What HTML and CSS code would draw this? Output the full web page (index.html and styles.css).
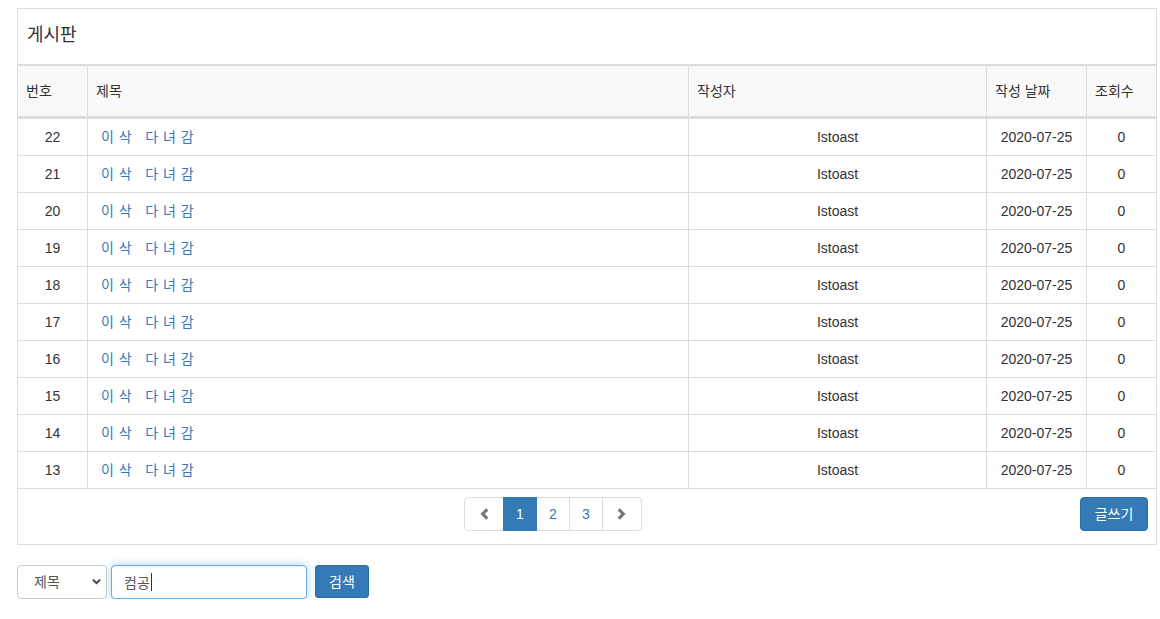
FILE: index.html
```html
<!DOCTYPE html>
<html lang="ko">
<head>
<meta charset="utf-8">
<title>게시판</title>
<link rel="stylesheet" href="styles.css">
</head>
<body>
<div class="page">
  <div class="panel">
    <div class="panel-heading">게시판</div>
    <table class="board">
      <colgroup>
        <col class="col-no"><col class="col-title"><col class="col-author"><col class="col-date"><col class="col-views">
      </colgroup>
      <thead>
        <tr><th>번호</th><th>제목</th><th>작성자</th><th>작성 날짜</th><th>조회수</th></tr>
      </thead>
      <tbody>
        <tr><td class="center">22</td><td><a href="#">이 삭&nbsp;&nbsp; 다 녀 감</a></td><td class="center">Istoast</td><td class="center">2020-07-25</td><td class="center">0</td></tr>
        <tr><td class="center">21</td><td><a href="#">이 삭&nbsp;&nbsp; 다 녀 감</a></td><td class="center">Istoast</td><td class="center">2020-07-25</td><td class="center">0</td></tr>
        <tr><td class="center">20</td><td><a href="#">이 삭&nbsp;&nbsp; 다 녀 감</a></td><td class="center">Istoast</td><td class="center">2020-07-25</td><td class="center">0</td></tr>
        <tr><td class="center">19</td><td><a href="#">이 삭&nbsp;&nbsp; 다 녀 감</a></td><td class="center">Istoast</td><td class="center">2020-07-25</td><td class="center">0</td></tr>
        <tr><td class="center">18</td><td><a href="#">이 삭&nbsp;&nbsp; 다 녀 감</a></td><td class="center">Istoast</td><td class="center">2020-07-25</td><td class="center">0</td></tr>
        <tr><td class="center">17</td><td><a href="#">이 삭&nbsp;&nbsp; 다 녀 감</a></td><td class="center">Istoast</td><td class="center">2020-07-25</td><td class="center">0</td></tr>
        <tr><td class="center">16</td><td><a href="#">이 삭&nbsp;&nbsp; 다 녀 감</a></td><td class="center">Istoast</td><td class="center">2020-07-25</td><td class="center">0</td></tr>
        <tr><td class="center">15</td><td><a href="#">이 삭&nbsp;&nbsp; 다 녀 감</a></td><td class="center">Istoast</td><td class="center">2020-07-25</td><td class="center">0</td></tr>
        <tr><td class="center">14</td><td><a href="#">이 삭&nbsp;&nbsp; 다 녀 감</a></td><td class="center">Istoast</td><td class="center">2020-07-25</td><td class="center">0</td></tr>
        <tr><td class="center">13</td><td><a href="#">이 삭&nbsp;&nbsp; 다 녀 감</a></td><td class="center">Istoast</td><td class="center">2020-07-25</td><td class="center">0</td></tr>
      </tbody>
    </table>
    <div class="panel-footer">
      <div class="pager-wrap">
        <ul class="pagination">
          <li><a href="#" class="nav-arrow" aria-label="이전"><svg width="10" height="12" viewBox="0 0 10 12"><path d="M7.2 0.2 L9.4 2.4 L5.8 6 L9.4 9.6 L7.2 11.8 L1.4 6 Z" fill="#777"/></svg></a></li>
          <li><a href="#" class="num active">1</a></li>
          <li><a href="#" class="num">2</a></li>
          <li><a href="#" class="num">3</a></li>
          <li><a href="#" class="nav-arrow" aria-label="다음"><svg width="10" height="12" viewBox="0 0 10 12"><path d="M2.8 0.2 L0.6 2.4 L4.2 6 L0.6 9.6 L2.8 11.8 L8.6 6 Z" fill="#777"/></svg></a></li>
        </ul>
      </div>
      <a href="#" class="btn btn-write">글쓰기</a>
    </div>
  </div>

  <form class="search">
    <div class="select-wrap">
      <select class="select">
        <option>제목</option>
        <option>작성자</option>
      </select>
      <svg class="select-arrow" width="9" height="6" viewBox="0 0 9 6"><path d="M0.8 0.6 L4.5 4.2 L8.2 0.6" fill="none" stroke="#444" stroke-width="2"/></svg>
    </div>
    <div class="input-wrap">
      <input class="text-input focused" type="text" value="컴공">
      <span class="caret-line"></span>
    </div>
    <button type="button" class="btn btn-search">검색</button>
  </form>
</div>
</body>
</html>
```
FILE: styles.css
```css
* {
  box-sizing: border-box;
}

body {
  margin: 0;
  font-family: "Liberation Sans", "Noto Sans CJK KR", sans-serif;
  font-size: 14px;
  line-height: 20px;
  color: #333;
  background: #fff;
}

a {
  color: #337ab7;
  text-decoration: none;
}

.page {
  margin: 8px 3px 0 17px;
}

.panel {
  border: 1px solid #ddd;
  background: #fff;
}

.panel-heading {
  padding: 16px 9px 19px;
  font-size: 18px;
  line-height: 20px;
  border-bottom: 1px solid #ddd;
}

.board {
  width: 100%;
  table-layout: fixed;
  border-collapse: separate;
  border-spacing: 0;
}

.col-no { width: 69px; }
.col-title { width: 601px; }
.col-author { width: 298px; }
.col-date { width: 100px; }
.col-views { width: 70px; }

.board th {
  text-align: left;
  font-weight: normal;
  padding: 15px 8px;
  background: #f9f9f9;
  border-top: 1px solid #ddd;
  border-bottom: 2px solid #ddd;
}

.board td {
  padding: 8px;
  border-top: 1px solid #ddd;
  white-space: nowrap;
}

.board th + th,
.board td + td {
  border-left: 1px solid #ddd;
}

.board td.center {
  text-align: center;
}

.board td a {
  padding-left: 5px;
  letter-spacing: 0.5px;
}

.panel-footer {
  display: flex;
  align-items: flex-start;
  padding: 8px 8px 13px 8px;
  border-top: 1px solid #ddd;
}

.pager-wrap {
  flex: 1;
  display: flex;
  justify-content: center;
}

.pagination {
  display: flex;
  list-style: none;
  margin: 0;
  padding: 0;
}

.pagination li a {
  display: flex;
  align-items: center;
  justify-content: center;
  height: 34px;
  border: 1px solid #ddd;
  margin-left: -1px;
  background: #fff;
  color: #337ab7;
}

.pagination li:first-child a {
  margin-left: 0;
  border-radius: 4px 0 0 4px;
}

.pagination li:last-child a {
  border-radius: 0 4px 4px 0;
}

.pagination .nav-arrow {
  width: 40px;
}

.pagination .num {
  width: 34px;
}

.pagination .num.active {
  position: relative;
  z-index: 2;
  background: #337ab7;
  border-color: #337ab7;
  color: #fff;
}

.btn {
  display: inline-flex;
  align-items: center;
  justify-content: center;
  font-family: inherit;
  font-size: 14px;
  line-height: 20px;
  color: #fff;
  background: #337ab7;
  border: 1px solid #2e6da4;
  border-radius: 4px;
  cursor: pointer;
}

.btn-write {
  width: 68px;
  height: 34px;
}

.search {
  margin-top: 20px;
  display: flex;
  align-items: flex-start;
}

.select-wrap {
  position: relative;
  width: 90px;
  height: 34px;
  margin-right: 4px;
}

.select {
  appearance: none;
  -webkit-appearance: none;
  width: 100%;
  height: 34px;
  padding: 6px 20px 6px 16px;
  font-family: inherit;
  font-size: 14px;
  line-height: 20px;
  color: #555;
  background: #fff;
  border: 1px solid #ccc;
  border-radius: 4px;
}

.select-arrow {
  position: absolute;
  right: 6px;
  top: 14px;
  pointer-events: none;
}

.input-wrap {
  position: relative;
  width: 196px;
  height: 34px;
  margin-right: 8px;
}

.text-input {
  width: 100%;
  height: 34px;
  margin: 0;
  padding: 6px 12px;
  font-family: inherit;
  font-size: 14px;
  line-height: 20px;
  color: #555;
  background: #fff;
  border: 1px solid #ccc;
  border-radius: 4px;
  outline: none;
}

.text-input.focused,
.text-input:focus {
  border-color: #66afe9;
  box-shadow: inset 0 1px 1px rgba(0, 0, 0, 0.075), 0 0 8px rgba(102, 175, 233, 0.6);
}

.caret-line {
  position: absolute;
  left: 40px;
  top: 8px;
  width: 1px;
  height: 18px;
  background: #333;
  pointer-events: none;
}

.btn-search {
  width: 54px;
  height: 33px;
  padding: 0;
  border-radius: 3px;
}
```
